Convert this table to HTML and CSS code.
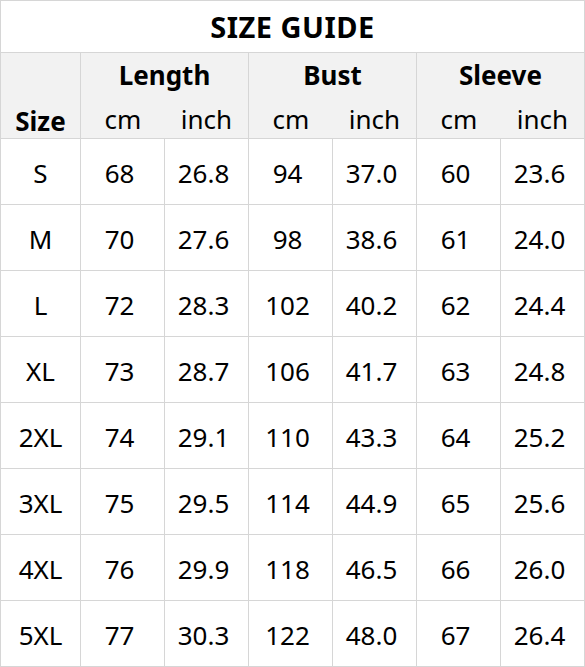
FILE: index.html
```html
<!DOCTYPE html>
<html>
<head>
<meta charset="utf-8">
<link rel="stylesheet" href="styles.css">
</head>
<body>
<div class="guide">
  <div class="title">SIZE GUIDE</div>
  <div class="head size">Size</div>
  <div class="head group"><div class="gname">Length</div><div class="subs"><span>cm</span><span>inch</span></div></div>
  <div class="head group"><div class="gname">Bust</div><div class="subs"><span>cm</span><span>inch</span></div></div>
  <div class="head group"><div class="gname">Sleeve</div><div class="subs"><span>cm</span><span>inch</span></div></div>

  <div class="cell label">S</div><div class="cell num">68</div><div class="cell num">26.8</div><div class="cell num">94</div><div class="cell num">37.0</div><div class="cell num">60</div><div class="cell num">23.6</div>
  <div class="cell label">M</div><div class="cell num">70</div><div class="cell num">27.6</div><div class="cell num">98</div><div class="cell num">38.6</div><div class="cell num">61</div><div class="cell num">24.0</div>
  <div class="cell label">L</div><div class="cell num">72</div><div class="cell num">28.3</div><div class="cell num">102</div><div class="cell num">40.2</div><div class="cell num">62</div><div class="cell num">24.4</div>
  <div class="cell label">XL</div><div class="cell num">73</div><div class="cell num">28.7</div><div class="cell num">106</div><div class="cell num">41.7</div><div class="cell num">63</div><div class="cell num">24.8</div>
  <div class="cell label">2XL</div><div class="cell num">74</div><div class="cell num">29.1</div><div class="cell num">110</div><div class="cell num">43.3</div><div class="cell num">64</div><div class="cell num">25.2</div>
  <div class="cell label">3XL</div><div class="cell num">75</div><div class="cell num">29.5</div><div class="cell num">114</div><div class="cell num">44.9</div><div class="cell num">65</div><div class="cell num">25.6</div>
  <div class="cell label">4XL</div><div class="cell num">76</div><div class="cell num">29.9</div><div class="cell num">118</div><div class="cell num">46.5</div><div class="cell num">66</div><div class="cell num">26.0</div>
  <div class="cell label">5XL</div><div class="cell num">77</div><div class="cell num">30.3</div><div class="cell num">122</div><div class="cell num">48.0</div><div class="cell num">67</div><div class="cell num">26.4</div>
</div>
</body>
</html>
```

FILE: styles.css
```css
html, body {
  margin: 0;
  padding: 0;
  background: #ffffff;
}
.guide {
  width: 585px;
  height: 667px;
  box-sizing: border-box;
  display: grid;
  grid-template-columns: 79px repeat(6, 83px);
  grid-template-rows: 51px 85px repeat(8, 65px);
  gap: 1px;
  padding: 1px;
  background: #d6d6d6;
  font-family: "Noto Sans", "Open Sans", sans-serif;
  color: #000;
}
.title {
  grid-column: 1 / -1;
  background: #fff;
  text-align: center;
  font-weight: 700;
  font-size: 29px;
  line-height: 51px;
  letter-spacing: 0.5px;
}
.head {
  background: #f2f2f2;
}
.size {
  display: flex;
  align-items: flex-end;
  justify-content: center;
  font-weight: 700;
  font-size: 26px;
  line-height: 30px;
  padding-bottom: 2px;
}
.group {
  grid-column: span 2;
  display: flex;
  flex-direction: column;
}
.gname {
  font-weight: 700;
  font-size: 26px;
  line-height: 30px;
  padding-top: 7px;
  text-align: center;
}
.subs {
  margin-top: 14px;
  display: grid;
  grid-template-columns: 84px 83px;
  font-size: 26px;
  line-height: 30px;
  text-align: center;
}
.cell {
  background: #fff;
  font-size: 26px;
  line-height: 62px;
  padding-top: 3px;
  text-align: center;
}
.num {
  padding-right: 6px;
}
```
